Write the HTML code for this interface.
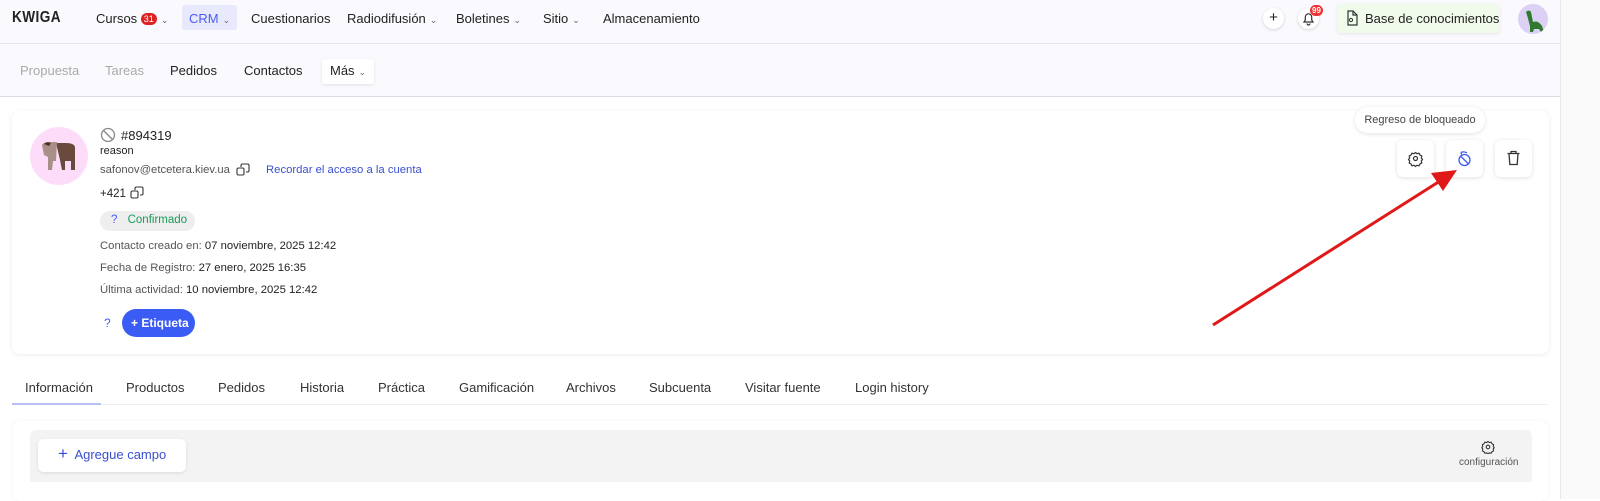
<!DOCTYPE html>
<html><head><meta charset="utf-8"><style>
*{box-sizing:border-box;margin:0;padding:0}
body{width:1600px;height:499px;overflow:hidden;background:#fff;font-family:"Liberation Sans",sans-serif;color:#222;position:relative;font-size:13px}
.abs{position:absolute}
.top{left:0;top:0;width:1560px;height:44px;background:#f9f9fe;border-bottom:1px solid #e6e6f0}
.sub{left:0;top:44px;width:1560px;height:53px;background:#f9f9fe;border-bottom:1px solid #dcdce6}
.nav{font-size:13px;color:#222;top:11px}
.chev{font-size:9px;color:#666;margin-left:4px}
.scroll{left:1560px;top:0;width:40px;height:499px;background:#fafafa;border-left:1px solid #e8e8e8}
.card{left:12px;top:111px;width:1537px;height:243px;background:#fff;border-radius:8px;box-shadow:0 1px 6px rgba(0,0,0,.08)}
.btn{width:37px;height:37px;background:#fff;border-radius:6px;box-shadow:0 1px 5px rgba(0,0,0,.12);top:140px}
.lbl{color:#555;font-size:11.3px}
.tab{top:380px;font-size:13px;color:#333}
</style></head><body>
<div class="abs top"></div>
<div class="abs sub"></div>
<div class="abs scroll"></div>
<div class="abs" style="left:12px;top:9px;font-weight:bold;font-size:16px;letter-spacing:.5px;transform:scaleX(.85);transform-origin:left">KWIGA</div>
<div class="abs nav" style="left:96px">Cursos <span style="display:inline-block;background:#d22;color:#fff;font-size:9px;border-radius:7px;padding:1px 3px;vertical-align:1px">31</span><span class="chev">⌄</span></div>
<div class="abs" style="left:182px;top:5px;width:55px;height:25px;background:#e8e9fc;border-radius:3px"></div>
<div class="abs nav" style="left:189px;color:#4a5cf0">CRM<span class="chev">⌄</span></div>
<div class="abs nav" style="left:251px">Cuestionarios</div>
<div class="abs nav" style="left:347px">Radiodifusión<span class="chev">⌄</span></div>
<div class="abs nav" style="left:456px">Boletines<span class="chev">⌄</span></div>
<div class="abs nav" style="left:543px">Sitio<span class="chev">⌄</span></div>
<div class="abs nav" style="left:603px">Almacenamiento</div>
<div class="abs" style="left:1263px;top:8px;width:21px;height:21px;border-radius:50%;background:#fff;box-shadow:0 1px 3px rgba(0,0,0,.15);text-align:center;line-height:20px;font-size:15px">+</div>
<div class="abs" style="left:1298px;top:8px;width:21px;height:21px;border-radius:50%;background:#fff;box-shadow:0 1px 3px rgba(0,0,0,.15)">
<svg width="21" height="21" viewBox="0 0 21 21"><path d="M6 14h9l-1.3-2V9a3.2 3.2 0 0 0-6.4 0v3z M9 15.5a1.5 1.5 0 0 0 3 0" fill="none" stroke="#333" stroke-width="1.2"/></svg></div>
<div class="abs" style="left:1310px;top:5px;background:#e33;color:#fff;font-size:8px;font-weight:bold;border-radius:6px;padding:1px 2px">99</div>
<div class="abs" style="left:1337px;top:4px;width:163px;height:29px;background:#f0fbeb;border-radius:4px;box-shadow:0 1px 3px rgba(0,0,0,.08)"></div>
<svg class="abs" style="left:1345px;top:10px" width="14" height="16" viewBox="0 0 14 16"><path d="M3 1h5l4 4v10H3z M8 1v4h4" fill="none" stroke="#333" stroke-width="1.2"/><circle cx="6" cy="10" r="1.6" fill="none" stroke="#333"/></svg>
<div class="abs" style="left:1365px;top:11px;font-size:13px">Base de conocimientos</div>
<div class="abs" style="left:1518px;top:4px;width:30px;height:30px;border-radius:50%;background:#dcd0f5;overflow:hidden"><svg width="30" height="30"><path d="M8 8q3-3 5 0l2 10q5-2 9 4l2 6h-3l-2-3h-5l-1 3h-3l0-6L9 11z" fill="#2f7a2f"/></svg></div>
<div class="abs" style="left:20px;top:63px;color:#aaa">Propuesta</div>
<div class="abs" style="left:105px;top:63px;color:#aaa">Tareas</div>
<div class="abs" style="left:170px;top:63px">Pedidos</div>
<div class="abs" style="left:244px;top:63px">Contactos</div>
<div class="abs" style="left:322px;top:59px;width:52px;height:25px;background:#fff;border-radius:3px;box-shadow:0 1px 3px rgba(0,0,0,.1);padding:4px 8px">Más<span class="chev">⌄</span></div>

<div class="abs card"></div>
<div class="abs" style="left:30px;top:127px;width:58px;height:58px;border-radius:50%;background:#fcdcf8;overflow:hidden"><svg width="58" height="58"><path d="M26 16h10q8 0 9 4v23h-4v-9h-6v9h-3l-2-10z" fill="#6b4a3e"/><path d="M12 18q2-3 6-3h9l-1 19h-3l-1 9h-4v-13l-4-2z" fill="#a89088"/><path d="M14 17q3-3 7-1l-2 3z" fill="#4a3028"/></svg></div>
<svg class="abs" style="left:100px;top:127px" width="16" height="16"><circle cx="8" cy="8" r="6.5" fill="none" stroke="#888" stroke-width="1.3"/><path d="M3.5 3.5l9 9" stroke="#888" stroke-width="1.3"/></svg>
<div class="abs" style="left:121px;top:128px;font-size:13px">#894319</div>
<div class="abs" style="left:100px;top:145px;font-size:11px">reason</div>
<div class="abs lbl" style="left:100px;top:164px">safonov@etcetera.kiev.ua</div>
<svg class="abs" style="left:236px;top:163px" width="14" height="14"><rect x="1" y="5" width="7" height="7" rx="1.5" fill="none" stroke="#333" stroke-width="1.1"/><path d="M5 4V2.5A1.5 1.5 0 0 1 6.5 1h5A1.5 1.5 0 0 1 13 2.5v5A1.5 1.5 0 0 1 11.5 9H10" fill="none" stroke="#333" stroke-width="1.1"/></svg>
<div class="abs" style="left:266px;top:164px;color:#3a4fd0;font-size:11.3px">Recordar el acceso a la cuenta</div>
<div class="abs" style="left:100px;top:188px;font-size:11.5px">+421</div>
<svg class="abs" style="left:130px;top:186px" width="14" height="14"><rect x="1" y="5" width="7" height="7" rx="1.5" fill="none" stroke="#333" stroke-width="1.1"/><path d="M5 4V2.5A1.5 1.5 0 0 1 6.5 1h5A1.5 1.5 0 0 1 13 2.5v5A1.5 1.5 0 0 1 11.5 9H10" fill="none" stroke="#333" stroke-width="1.1"/></svg>
<div class="abs" style="left:100px;top:211px;width:95px;height:20px;background:#eee;border-radius:10px;font-size:11.5px;padding:3px 0 0 11px"><span style="color:#4a5cf0">?</span> <span style="color:#1a9a5a;margin-left:7px">Confirmado</span></div>
<div class="abs lbl" style="left:100px;top:240px">Contacto creado en: <span style="color:#222">07 noviembre, 2025 12:42</span></div>
<div class="abs lbl" style="left:100px;top:262px">Fecha de Registro: <span style="color:#222">27 enero, 2025 16:35</span></div>
<div class="abs lbl" style="left:100px;top:284px">Última actividad: <span style="color:#222">10 noviembre, 2025 12:42</span></div>
<div class="abs" style="left:104px;top:316px;color:#4a5cf0;font-size:12px">?</div>
<div class="abs" style="left:122px;top:309px;width:73px;height:28px;background:#3a5cf5;border-radius:14px;color:#fff;font-weight:bold;font-size:12px;padding:7px 0 0 9px">+ Etiqueta</div>

<div class="abs" style="left:1355px;top:107px;width:130px;height:26px;background:#fff;border-radius:13px;box-shadow:0 1px 5px rgba(0,0,0,.12);font-size:11px;color:#444;text-align:center;line-height:26px">Regreso de bloqueado</div>
<div class="abs btn" style="left:1397px"><svg width="37" height="37"><circle cx="18.5" cy="18.5" r="2" fill="none" stroke="#333" stroke-width="1.2"/><path d="M18.5 12.5l1.5 1.2 2-.5 1 1.8 1.8 1-.5 2 1.2 1.5-1.2 1.5.5 2-1.8 1-1 1.8-2-.5-1.5 1.2-1.5-1.2-2 .5-1-1.8-1.8-1 .5-2-1.2-1.5 1.2-1.5-.5-2 1.8-1 1-1.8 2 .5z" fill="none" stroke="#333" stroke-width="1.2"/></svg></div>
<div class="abs btn" style="left:1446px"><svg width="37" height="37"><circle cx="18.5" cy="20" r="5.5" fill="none" stroke="#3a5cf5" stroke-width="1.3"/><path d="M14.5 16l8 8M15 12.5q3-1.5 6 .5M15 12.5l.5 2" fill="none" stroke="#3a5cf5" stroke-width="1.3"/></svg></div>
<div class="abs btn" style="left:1495px"><svg width="37" height="37"><path d="M12.5 13.5h12M16 13.5v-2h5v2M14 13.5l.8 11h7.4l.8-11" fill="none" stroke="#333" stroke-width="1.3"/></svg></div>
<svg class="abs" style="left:0;top:0" width="1600" height="499"><line x1="1213" y1="325" x2="1440" y2="181" stroke="#e01818" stroke-width="3"/><polygon points="1457,170 1431,173 1443,191" fill="#e01818"/></svg>

<div class="abs tab" style="left:25px">Información</div>
<div class="abs tab" style="left:126px">Productos</div>
<div class="abs tab" style="left:218px">Pedidos</div>
<div class="abs tab" style="left:300px">Historia</div>
<div class="abs tab" style="left:378px">Práctica</div>
<div class="abs tab" style="left:459px">Gamificación</div>
<div class="abs tab" style="left:566px">Archivos</div>
<div class="abs tab" style="left:649px">Subcuenta</div>
<div class="abs tab" style="left:745px">Visitar fuente</div>
<div class="abs tab" style="left:855px">Login history</div>
<div class="abs" style="left:12px;top:404px;width:1536px;height:1px;background:#eee"></div>
<div class="abs" style="left:12px;top:403px;width:89px;height:2px;background:#b8bff5"></div>
<div class="abs" style="left:13px;top:421px;width:1535px;height:80px;background:#fff;border-radius:8px;box-shadow:0 0 5px rgba(0,0,0,.06)"></div>
<div class="abs" style="left:30px;top:430px;width:1502px;height:52px;background:#f3f3f3;border-radius:6px 6px 0 0"></div>
<div class="abs" style="left:38px;top:439px;width:148px;height:33px;background:#fff;border-radius:5px;box-shadow:0 1px 3px rgba(0,0,0,.1);color:#3a4fd0;font-size:13px;padding:8px 0 0 20px"><span style="font-size:17px;line-height:13px">+</span>&nbsp; Agregue campo</div>
<svg class="abs" style="left:1481px;top:440px" width="14" height="14"><circle cx="7" cy="7" r="1.8" fill="none" stroke="#333" stroke-width="1.1"/><path d="M7 1.5l1.3 1 1.8-.4.9 1.6 1.6.9-.4 1.8 1 1.3-1 1.3.4 1.8-1.6.9-.9 1.6-1.8-.4-1.3 1-1.3-1-1.8.4-.9-1.6-1.6-.9.4-1.8-1-1.3 1-1.3-.4-1.8 1.6-.9.9-1.6 1.8.4z" fill="none" stroke="#333" stroke-width="1.1"/></svg>
<div class="abs" style="left:1459px;top:457px;font-size:10px;color:#555">configuración</div>
</body></html>
